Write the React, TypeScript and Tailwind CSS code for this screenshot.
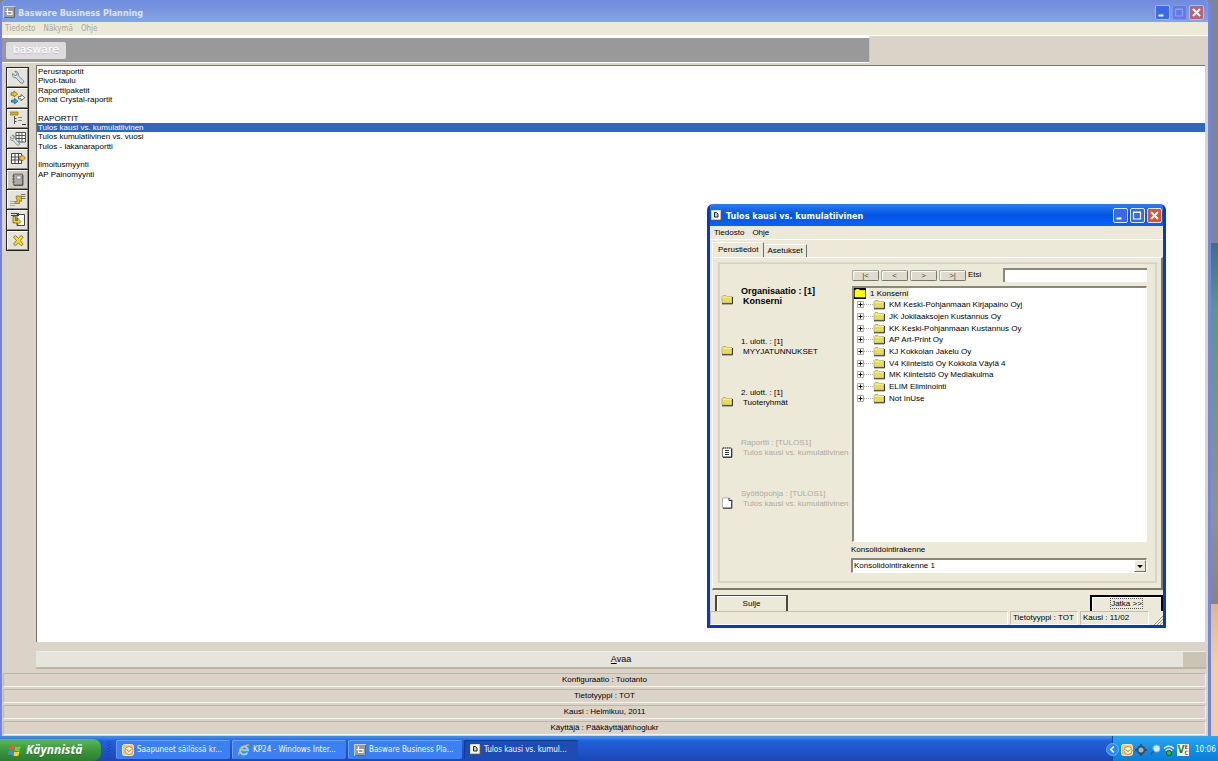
import type { ReactNode } from "react";
import clsx from "clsx";

const UI_FONT = "font-['Liberation_Sans',sans-serif]";
const TAHOMA = "font-['DejaVu_Sans_Condensed','DejaVu_Sans',sans-serif]";

const reports = [
  "Perusraportit",
  "Pivot-taulu",
  "Raporttipaketit",
  "Omat Crystal-raportit",
  "",
  "RAPORTIT",
  "Tulos kausi vs. kumulatiivinen",
  "Tulos kumulatiivinen vs. vuosi",
  "Tulos - lakanaraportti",
  "",
  "Ilmoitusmyynti",
  "AP Painomyynti",
];

const organisations = [
  "KM Keski-Pohjanmaan Kirjapaino Oyj",
  "JK Jokilaaksojen Kustannus Oy",
  "KK Keski-Pohjanmaan Kustannus Oy",
  "AP Art-Print Oy",
  "KJ Kokkolan Jakelu Oy",
  "V4 Kiinteistö Oy Kokkola Väylä 4",
  "MK Kiinteistö Oy Mediakulma",
  "ELIM Eliminointi",
  "Not InUse",
];

const statusLines = [
  "Konfiguraatio : Tuotanto",
  "Tietotyyppi : TOT",
  "Kausi : Helmikuu, 2011",
  "Käyttäjä : Pääkäyttäjät\\hoglukr",
];

function FolderIcon({ open = false }: { open?: boolean }) {
  return (
    <svg viewBox="0 0 12 11" className="w-3 h-[11px] shrink-0">
      {open && <rect width="12" height="11" fill="#000" />}
      <path d="M1 9V2.5L2 1.5h3l1 1h5V9z" fill={open ? "#ffff00" : "#e6dc5c"} stroke={open ? "#ffff00" : "#a8a47c"} strokeWidth=".7" />
      {!open && <path d="M1 9.8h10.6V3" fill="none" stroke="#222" strokeWidth="1" />}
      {!open && <path d="M1.5 3.3h9" stroke="#fffbc0" strokeWidth=".7" />}
    </svg>
  );
}

function ReportIcon() {
  return (
    <svg viewBox="0 0 12 12" className="size-3 shrink-0">
      <path d="M1.5 2h9v9h-9z" fill="#fff" stroke="#777" />
      <path d="M10.8 2.5v8.800H2" stroke="#222" fill="none" />
      <path d="M2.5 1v2M4.5 1v2M6.500 1v2M8.500 1v2" stroke="#666" strokeWidth=".8" />
      <path d="M4 4.500h4M4 6.500h4M4 8.500h4" stroke="#333" />
    </svg>
  );
}

function PageIcon() {
  return (
    <svg viewBox="0 0 12 12" className="size-3 shrink-0">
      <path d="M1.5 1h7l2 2v8h-9z" fill="#fff" stroke="#999" strokeWidth=".7" />
      <path d="M8 1v2.5h2.5M10.8 3v8.2H2" fill="none" stroke="#222" />
    </svg>
  );
}

const dimensions: { title: string; value: string; icon: ReactNode; tone: string }[] = [
  { title: "Organisaatio : [1]", value: "Konserni", icon: <FolderIcon />, tone: "font-bold text-[9px]" },
  { title: "1. ulott. : [1]", value: "MYYJATUNNUKSET", icon: <FolderIcon />, tone: "" },
  { title: "2. ulott. : [1]", value: "Tuoteryhmät", icon: <FolderIcon />, tone: "" },
  { title: "Raportti : [TULOS1]", value: "Tulos kausi vs. kumulatiivinen", icon: <ReportIcon />, tone: "text-[#aeab9c]" },
  { title: "Syöttöpohja : [TULOS1]", value: "Tulos kausi vs. kumulatiivinen", icon: <PageIcon />, tone: "text-[#aeab9c]" },
];

const wrench = (
  <path
    d="M4.800 1.400 7 3.600 6.600 5.200 5 5.600 2.700 3.400C1.900 5.800 3.400 8 6 7.800l4.900 5.200c1.700 1.100 3.500-.8 2.300-2.400L8.300 5.700C8.900 3 7.200.9 4.800 1.400z"
    fill="#cfe6ee"
    stroke="#6a7880"
    strokeWidth=".9"
  />
);

const tools: { label: string; pressed?: boolean; icon: ReactNode }[] = [
  { label: "Asetukset", icon: wrench },
  {
    label: "Siirto",
    icon: (
      <>
        <path d="M1 2.800h3V1l3.600 3L4 7V5.200H1z" fill="#f0cf20" stroke="#6b5a10" strokeWidth=".7" />
        <path d="M1.500 10.2h3V8.4l3.400 2.8-3.400 2.7v-1.700h-3z" fill="#35a8d8" stroke="#18506c" strokeWidth=".7" />
        <path d="M8.5 6.4h2.6V4.500l3.700 3.100-3.700 3.100V8.8H8.500z" fill="#fff" stroke="#444" strokeWidth=".8" />
      </>
    ),
  },
  {
    label: "Rakenne",
    icon: (
      <>
        <path d="M0 1h8v3H0z" fill="#c8b41c" stroke="#7c7010" strokeWidth=".6" />
        <path d="M4.500 5v8M4.500 7.500h2M4.500 10.500h2" stroke="#555" fill="none" />
        <path d="M8 6.500h4M8 9.500h4" stroke="#888" fill="none" />
        <path d="M12 13.500h4" stroke="#333" fill="none" />
      </>
    ),
  },
  {
    label: "Taulukon asetukset",
    icon: (
      <>
        <path d="M6 1.500h9.500v9.500H6zM6 4.500h9.500M6 7.500h9.500M9 1.500v9.500M12 1.500v9.500" fill="#fff" stroke="#444" strokeWidth=".9" />
        <g transform="translate(-2 3) scale(.85)">{wrench}</g>
      </>
    ),
  },
  {
    label: "Muokkaa taulukkoa",
    icon: (
      <>
        <path d="M1.500 2.500h10v10h-10zM1.500 6h10M1.500 9h10M5 2.500v10M8.500 2.500v10" fill="#fff" stroke="#333" strokeWidth=".9" />
        <path d="m9.5 8.500 1-3.500 2.500-.5L15.500 7 13 9.600z" fill="#eec928" stroke="#6f5a10" strokeWidth=".7" />
      </>
    ),
  },
  {
    label: "Muistikirja",
    pressed: true,
    icon: (
      <>
        <path d="M3.500 2h9v11h-9z" fill="#aeaaa4" stroke="#666" strokeWidth=".9" />
        <path d="M6.500 4h4.500v3H6.500z" fill="#eee" stroke="#777" strokeWidth=".6" />
        <path d="M2.200 4h2.400M2.200 7h2.400M2.200 10h2.400M13 3v10.400H4" stroke="#444" strokeWidth=".8" fill="none" />
      </>
    ),
  },
  {
    label: "Vie tiedot",
    icon: (
      <>
        <path d="M11 2.500h4.500M11 4.500h4.500M11 6.500h4.500" stroke="#777" />
        <path d="M0 9.500h5M0 11.500h5M0 13.500h5" stroke="#aaa" />
        <path d="M5 11.500V9.500h2V7H6.500L6 4h5.500v5.500L9.500 8.500v3z" fill="#dcc01c" stroke="#6b5c14" strokeWidth=".6" />
      </>
    ),
  },
  {
    label: "Tuo tiedot",
    icon: (
      <>
        <path d="M7 2.500h7.500v11H7z" fill="#fff" stroke="#333" strokeWidth=".9" />
        <path d="M1 1.500h8M1 3.500h8" stroke="#444" />
        <path d="M3 4.500h2.500v4h2V6L11 9.500 7.500 13v-2H3z" fill="#efd02a" stroke="#5f5110" strokeWidth=".7" />
      </>
    ),
  },
  {
    label: "Sulje",
    icon: (
      <path
        d="m3.500 4 2-1.500 2.900 2.700 2.800-2.700 2 1.500-2.800 3.600 2.800 3.600-2 1.500-2.800-2.900-2.900 2.900-2-1.500 2.900-3.600z"
        fill="#f2dc26"
        stroke="#7b7010"
        strokeWidth=".8"
      />
    ),
  },
];

function BaswareIcon() {
  return (
    <svg viewBox="0 0 12 12" className="size-3 shrink-0">
      <rect width="12" height="12" fill="#9a9a9a" />
      <path d="M.500 12V.500H12" fill="none" stroke="#d0d0d0" />
      <path d="M11.500 1v10.500H1" fill="none" stroke="#666" />
      <path d="M4.500 2.500V8.500h4.500v-3H4.500M2.500 5.500h2" fill="none" stroke="#fff" strokeWidth="1.200" />
    </svg>
  );
}

function DialogIcon() {
  return (
    <svg viewBox="0 0 11 11" className="size-[11px] shrink-0">
      <path d="M.5.5h9v9h-9z" fill="#fff" stroke="#ddd" />
      <path d="M10.300 1v9.300H1" fill="none" stroke="#555" />
      <path d="M3.500 2.500v4.500h3.500V4L5.500 2.500z" fill="#ccc" stroke="#222" />
    </svg>
  );
}

function OutlookIcon() {
  return (
    <svg viewBox="0 0 12 12" className="size-3 shrink-0">
      <rect x=".5" y=".5" width="11" height="11" rx="2" fill="#f2c878" stroke="#fbe6c0" />
      <circle cx="7" cy="6.5" r="4" fill="#fff6de" stroke="#d08a2c" />
      <path d="m4.5 5.500 2.500 2 2.500-2" fill="none" stroke="#b8741c" />
    </svg>
  );
}

function IeIcon() {
  return (
    <svg viewBox="0 0 12 12" className="size-3 shrink-0">
      <path d="M9.500 8.500A4 4 0 1 1 10 6.200H3.500" fill="none" stroke="#8fd2fa" strokeWidth="1.900" />
      <path d="M1 11C-.5 8 7 0 11 1" fill="none" stroke="#f4c430" strokeWidth="1.100" />
    </svg>
  );
}

function WindowsFlag() {
  return (
    <svg viewBox="0 0 14 13" className="w-[14px] h-[13px] shrink-0">
      <path d="M2 2.200C3.500 1 5 1.200 6.500 2L5.700 6C4.200 5.200 2.700 5.200 1 6z" fill="#f0582a" />
      <path d="M7.300 2.400c1.700.8 3.400.8 5.200-.2l-.9 4.200c-1.700.9-3.300.9-5.100.1z" fill="#86c83a" />
      <path d="M.9 6.900c1.600-.8 3.100-.8 4.700 0l-.9 4.200C3.200 10.300 1.700 10.300 0 11z" fill="#4a86f0" />
      <path d="M6.300 7.400c1.800.8 3.400.8 5.100-.1l-.9 4.200c-1.700.9-3.400.9-5.100 0z" fill="#fbd12c" />
    </svg>
  );
}

function CaptionButton({ kind, faded = false }: { kind: "min" | "max" | "close"; faded?: boolean }) {
  const label = { min: "Pienennä", max: "Suurenna", close: "Sulje" }[kind];
  return (
    <button
      aria-label={label}
      className={clsx(
        "size-[15px] rounded-xs border flex items-center justify-center",
        faded && kind === "max" ? "border-[#7f97e8]" : faded ? "border-[#aebbf0]" : "border-[#dfe8fc]",
        kind === "close" && (faded ? "bg-[#b5647c]" : "bg-[#e2502c]"),
        kind === "min" && (faded ? "bg-[#3c6ae6]" : "bg-[#3a68e8]"),
        kind === "max" && (faded ? "bg-[#5e7de2]" : "bg-[#3a68e8]")
      )}
    >
      <svg viewBox="0 0 13 13" className="size-[13px]" fill="none" stroke={faded && kind === "max" ? "#8ba0ec" : "#fff"}>
        {kind === "min" && <path d="M2.500 9.500h5" strokeWidth="2" />}
        {kind === "max" && <path d="M2.500 3.500h7v6.500h-7zM2 3h8" strokeWidth="1.200" />}
        {kind === "close" && <path d="m3 3 7 7M10 3l-7 7" strokeWidth="2" />}
      </svg>
    </button>
  );
}

function DimensionList() {
  return (
    <ul className="grid grid-rows-5 h-[254px] mt-[22px] w-[134px] shrink-0">
      {dimensions.map((d) => (
        <li key={d.title} className={clsx("flex gap-2 whitespace-nowrap leading-[10px]", d.tone)}>
          <span className="mt-2">{d.icon}</span>
          <span className="block">
            {d.title}
            <span className="block pl-[2px]">{d.value}</span>
          </span>
        </li>
      ))}
    </ul>
  );
}

function OrganisationTree() {
  return (
    <ul className="grow bg-white border-l-2 border-t-2 border-[#8a877b] border-r border-b border-r-white border-b-white">
      <li>
        <div className="flex items-center gap-[3px] h-[11px]">
          <FolderIcon open />
          <span className="bg-[#ece9d8] px-px leading-[11px]">1 Konserni</span>
        </div>
        <ul className="grid grid-rows-9 h-[105px]">
          {organisations.map((name) => (
            <li key={name} className="flex items-center pl-[2px] whitespace-nowrap leading-[11px]">
              <svg viewBox="0 0 17 9" className="w-[17px] h-[9px] shrink-0" fill="none">
                <path d="M1.500 1.500h6v6h-6z" stroke="#aaa" />
                <path d="M2.500 4.500h4M4.500 2.500v4" stroke="#000" />
                <path d="M8 4.500h9" stroke="#aaa" strokeDasharray="1 1" />
              </svg>
              <FolderIcon />
              <span className="pl-1">{name}</span>
            </li>
          ))}
        </ul>
      </li>
    </ul>
  );
}

function ReportDialog() {
  return (
    <section
      aria-label="Tulos kausi vs. kumulatiivinen"
      className="absolute left-[707px] top-[204px] w-[459px] h-[424px] flex flex-col bg-[#ece9d8] border-[3px] border-t-0 border-[#0838c8] rounded-t-md overflow-hidden"
    >
      <header className="h-[22px] shrink-0 -mx-[3px] px-1 flex items-center gap-1 bg-linear-to-b from-[#2a7cf4] via-[#0454e4] to-[#0464fc] text-white">
        <DialogIcon />
        <h2 className={clsx("grow pt-1 text-[9px] font-bold", TAHOMA)}>Tulos kausi vs. kumulatiivinen</h2>
        <div className="flex gap-[2px] pt-px">
          <CaptionButton kind="min" />
          <CaptionButton kind="max" />
          <CaptionButton kind="close" />
        </div>
      </header>
      <nav className="h-[14px] shrink-0 flex items-center gap-2 px-1 border-b border-white">
        <button>Tiedosto</button>
        <button>Ohje</button>
      </nav>
      <div role="tablist" className="flex items-end h-[17px] shrink-0 pl-[2px] pt-[2px]">
        <button role="tab" aria-selected="true" className="h-[15px] px-[5px] border-l border-t border-l-white border-t-white border-r border-r-[#716f64]">
          Perustiedot
        </button>
        <button role="tab" aria-selected="false" className="h-[13px] px-[3px] border-r border-r-[#716f64] border-t border-t-white">
          Asetukset
        </button>
      </div>
      <div className="grow min-h-0 pl-[5px] pr-1 pt-1 pb-[5px] ml-[2px] border-t border-l border-white border-r-2 border-b-2 border-r-[#7a776b] border-b-[#7a776b] flex">
        <div className="grow flex border-2 border-[#d8d5c5] pl-px pr-2 pb-2">
          <DimensionList />
          <div className="grow flex flex-col pt-1">
            <div className="flex items-center gap-[2px] h-[14px] mb-1 shrink-0 -ml-[3px]">
              {["|<", "<", ">", ">|"].map((c) => (
                <button
                  key={c}
                  className="w-[27px] h-[11px] leading-[9px] rounded-[2px] border border-[#77746a] border-t-[#a9a598] border-l-[#a9a598] bg-[#e0dccd] text-[#444] shadow-[inset_1px_1px_#fff]"
                >
                  {c}
                </button>
              ))}
              <label htmlFor="etsi" className="w-[33px]">
                Etsi
              </label>
              <input id="etsi" className="grow min-w-0 h-[14px] px-1 bg-white border-t-2 border-l-2 border-[#8a877b]" />
            </div>
            <div className="grow flex -ml-[3px]">
              <OrganisationTree />
            </div>
            <label htmlFor="rakenne" className="leading-[10px] pt-[3px] pb-[3px] -ml-[4px]">
              Konsolidointirakenne
            </label>
            <div className="relative -ml-[4px]">
              <select
                id="rakenne"
                className="block appearance-none w-full h-[15px] leading-[12px] px-px bg-white border-t-2 border-l-2 border-r border-b border-[#8a877b] border-r-white border-b-white"
              >
                <option>Konsolidointirakenne 1</option>
              </select>
              <span className="pointer-events-none absolute right-px top-[2px] w-3 h-3 bg-[#ece9d8] border border-white border-r-[#716f64] border-b-[#716f64] flex items-center justify-center">
                <svg viewBox="0 0 6 3" className="w-[6px] h-[3px]">
                  <path d="M0 0h6L3 3z" />
                </svg>
              </span>
            </div>
          </div>
        </div>
      </div>
      <footer className="shrink-0">
        <div className="flex justify-between pl-[5px] pt-[5px]">
          <button className="w-[73px] h-4 border-l-2 border-t border-r-2 border-[#4a4840] shadow-[inset_1px_1px_#fff]">Sulje</button>
          <button className="w-[73px] h-4 border-l-2 border-t-2 border-r-2 border-black shadow-[inset_1px_1px_#fff]">
            <span className="inline-block border border-dotted border-[#555] leading-[9px]">Jatka &gt;&gt;</span>
          </button>
        </div>
        <div className="flex h-[14px] gap-[2px] pr-[14px] relative leading-[12px] whitespace-nowrap">
          <span className="grow border border-[#c3bfae] border-r-white border-b-white" />
          <span className="w-[68px] pl-[2px] border border-[#c3bfae] border-r-white border-b-white">Tietotyyppi : TOT</span>
          <span className="w-[69px] pl-[2px] border border-[#c3bfae] border-r-white border-b-white">Kausi : 11/02</span>
          <svg viewBox="0 0 9 9" className="absolute right-0 bottom-0 size-[9px]" stroke="#9c9987">
            <path d="m0 9 9-9M3 9l6-6M6 9l3-3" />
          </svg>
        </div>
      </footer>
    </section>
  );
}

function MainWindow() {
  return (
    <main className="grow min-w-0 flex flex-col bg-[#dad4c8] border-l-2 border-r-3 border-[#7684dc] rounded-t-md overflow-hidden">
      <header className="h-[22px] shrink-0 flex items-center gap-[3px] pl-px pr-1 pt-[2px] bg-linear-to-b from-[#6f8be0] via-[#7a96df] to-[#82a6ea] text-[#dfe6fa]">
        <BaswareIcon />
        <h1 className={clsx("grow pt-[3px] text-[9px] font-bold", TAHOMA)}>Basware Business Planning</h1>
        <div className="flex gap-[2px]">
          <CaptionButton kind="min" faded />
          <CaptionButton kind="max" faded />
          <CaptionButton kind="close" faded />
        </div>
      </header>
      <nav className={clsx("h-[14px] shrink-0 flex items-center gap-2 px-[3px] bg-[#ece9d8] border-b border-white text-[#aaa797]", TAHOMA)}>
        <button>Tiedosto</button>
        <button>Näkymä</button>
        <button>Ohje</button>
      </nav>
      <div className="h-[27px] shrink-0 w-[72%] bg-[#999] border-t-2 border-b border-white border-r border-r-[#c8c4bc] pl-1 flex items-center">
        <div className="w-[60px] h-[17px] rounded-xs bg-[#dddbde] flex items-center justify-center text-[11px] text-white font-['DejaVu_Sans',sans-serif] text-shadow-2xs">
          basware
        </div>
      </div>
      <div className="grow flex pt-[2px]">
        <div className="w-[34px] shrink-0 pl-1 pt-[2px]">
          <div className="grid grid-rows-9 h-[184px] w-[23px] bg-[#222] border border-[#222] gap-y-px">
            {tools.map((tool) => (
              <button
                key={tool.label}
                aria-label={tool.label}
                className={clsx(
                  "flex items-center justify-center border border-white border-r-[#8d897e] border-b-[#8d897e]",
                  tool.pressed ? "bg-[#cfcbc3]" : "bg-[#e6e3dc]"
                )}
              >
                <svg viewBox="0 0 16 15" className="w-4 h-[15px] shrink-0" fill="none">
                  {tool.icon}
                </svg>
              </button>
            ))}
          </div>
        </div>
        <div className="grow bg-white border-t border-l border-[#77746a] mr-[3px]">
          <ul role="listbox" aria-label="Raportit" className="grid grid-rows-12 h-[113px] pt-px">
            {reports.map((name, i) => (
              <li
                key={i}
                role="option"
                aria-selected={i === 6}
                className={clsx("pl-px leading-[9px] flex items-center", i === 6 && "bg-[#2c67c2] text-white")}
              >
                {name}
              </li>
            ))}
          </ul>
        </div>
      </div>
      <div className="shrink-0 pl-[34px] pr-[2px] pt-[9px] pb-1">
        <button className="w-full h-[18px] text-[9px] bg-linear-to-r from-[#e7e4de] from-98% to-[#cbc3b4] to-98% border-t border-t-[#efece6] border-b-2 border-b-[#beb5a4]">
          <u>A</u>vaa
        </button>
      </div>
      <footer className="shrink-0 flex flex-col gap-[2px] pb-px pr-[2px] pl-px">
        {statusLines.map((line) => (
          <p key={line} className="h-[14px] leading-[12px] text-center border border-[#beb6a8] border-b-[#f4f1ea] border-r-[#f4f1ea] bg-[#dbd3c8]">
            {line}
          </p>
        ))}
      </footer>
    </main>
  );
}

function Taskbar() {
  const tasks = [
    { label: "Saapuneet säilössä kr...", icon: <OutlookIcon /> },
    { label: "KP24 - Windows Inter...", icon: <IeIcon /> },
    { label: "Basware Business Pla...", icon: <BaswareIcon /> },
    { label: "Tulos kausi vs. kumul...", icon: <DialogIcon />, active: true },
  ];
  return (
    <footer className={clsx("h-[25px] shrink-0 flex text-white bg-linear-to-b from-[#3c8cf0] from-5% via-[#245edc] via-20% to-[#1c48b4]", TAHOMA)}>
      <button className="w-[101px] h-[22px] mt-[3px] rounded-r-lg bg-linear-to-b from-[#5cb85c] via-[#3c983c] to-[#2c7c30] flex items-center gap-1 pl-2 text-[12px] font-bold italic font-['Open_Sans',sans-serif] text-shadow-xs">
        <WindowsFlag />
        Käynnistä
      </button>
      <svg viewBox="0 0 4 16" className="w-1 h-4 mt-[5px] ml-[6px] mr-[5px]">
        <path d="M1 1v15M3 0v15" stroke="#163fa8" strokeDasharray="1 2" />
      </svg>
      <div className="flex gap-[2px] pt-[4px] grow">
        {tasks.map((task) => (
          <button
            key={task.label}
            className={clsx(
              "w-[114px] h-[19px] px-[6px] flex items-center gap-[3px] rounded-xs whitespace-nowrap overflow-hidden",
              task.active
                ? "bg-[#1c4cb4] shadow-[inset_1px_1px_#143a90]"
                : "bg-[#3c80f4] shadow-[inset_1px_1px_#68a0fa]"
            )}
          >
            {task.icon}
            {task.label}
          </button>
        ))}
      </div>
      <div className="w-[106px] shrink-0 flex items-center gap-[2px] pt-[2px] bg-linear-to-b from-[#2ca8f4] via-[#1290e8] to-[#0f7cd4] border-l border-[#0c4c9c]">
        <button aria-label="Näytä piilotetut kuvakkeet" className="-ml-[7px]">
          <svg viewBox="0 0 13 13" className="size-[13px] shrink-0">
            <circle cx="6.500" cy="6.500" r="6" fill="#2a8ce8" stroke="#8cc8fa" strokeWidth=".7" />
            <path d="M7.800 3.500l-3 3 3 3" fill="none" stroke="#fff" strokeWidth="1.600" />
          </svg>
        </button>
        <OutlookIcon />
        <svg viewBox="0 0 12 12" className="size-3 shrink-0">
          <circle cx="6" cy="6" r="3.500" fill="#9cb4c8" stroke="#3c4c5c" strokeWidth="2" />
          <path d="M6 0v2M6 10v2M0 6h2M10 6h2" stroke="#3c4c5c" strokeWidth="2" />
        </svg>
        <svg viewBox="0 0 12 12" className="size-3 shrink-0">
          <circle cx="7.500" cy="4.500" r="3.500" fill="#d4ecfa" stroke="#8cb4e0" />
          <path d="M5 7 1.500 10.500" stroke="#3c58a0" strokeWidth="1.800" />
        </svg>
        <svg viewBox="0 0 12 12" className="size-3 shrink-0">
          <path d="M1 4.500q5-4.500 10 0M2.800 6.700q3.200-3 6.400 0" fill="none" stroke="#eee" strokeWidth="1.500" />
          <circle cx="6" cy="9" r="2.600" fill="#28c828" stroke="#333" strokeWidth=".8" />
        </svg>
        <span className="bg-white size-3 shrink-0 flex items-center justify-center text-[10px] leading-3 font-bold text-[#148c28]">
          V
          <span className="text-[6px] leading-[6px] text-[#e02828]">
            E<br />C
          </span>
        </span>
        <span className="pl-1">10:06</span>
      </div>
    </footer>
  );
}

export default function App() {
  return (
    <div className={clsx("relative min-h-screen flex flex-col bg-[#7c8698] text-[8px] text-black cursor-default", UI_FONT)}>
      <div className="grow flex">
        <MainWindow />
        <div className="w-[7px] shrink-0 bg-[linear-gradient(#7c8698_33%,#3f6f86_33%,#5a9790_42%,#8a9494_70%,#87857f_82%,#dcb888_82%,#f0d0a0_90%)]" />
      </div>
      <ReportDialog />
      <Taskbar />
    </div>
  );
}
